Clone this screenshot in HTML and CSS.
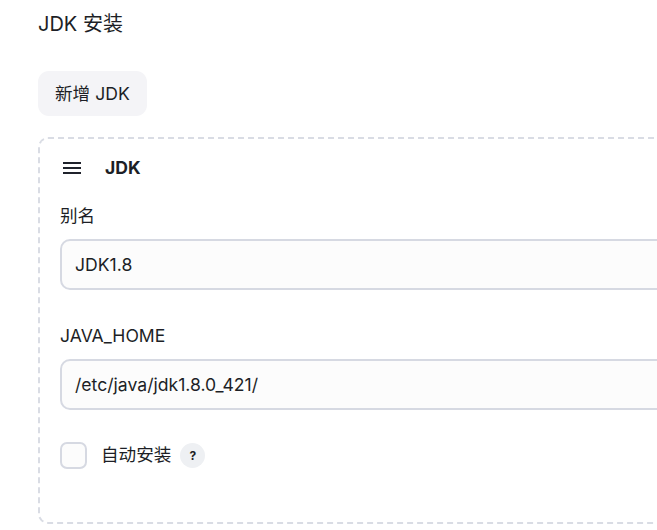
FILE: index.html
```html
<!DOCTYPE html>
<html lang="zh">
<head>
<meta charset="utf-8">
<link rel="stylesheet" href="styles.css">
</head>
<body>
<div class="page">
  <h2 class="section-title">JDK 安装</h2>
  <button class="add-btn" type="button">新增 JDK</button>
  <div class="repeat-card">
    <div class="card-header">
      <svg class="drag-icon" width="24" height="24" viewBox="0 0 24 24" aria-hidden="true">
        <path d="M3 7h18M3 12h18M3 17h18" stroke="#20232c" stroke-width="2" stroke-linecap="butt" fill="none"/>
      </svg>
      <span class="card-title">JDK</span>
    </div>
    <div class="field">
      <label class="field-label">别名</label>
      <div class="text-input"><span class="input-value">JDK1.8</span></div>
    </div>
    <div class="field field-second">
      <label class="field-label">JAVA_HOME</label>
      <div class="text-input"><span class="input-value">/etc/java/jdk1.8.0_421/</span></div>
    </div>
    <div class="check-row">
      <span class="checkbox"></span>
      <span class="check-label">自动安装</span>
      <span class="help">?</span>
    </div>
  </div>
</div>
</body>
</html>
```

FILE: styles.css
```css
html, body {
  margin: 0;
  padding: 0;
  background: #ffffff;
  overflow: hidden;
}
body {
  font-family: "Inter", "Noto Sans CJK SC", sans-serif;
  color: #1d1f26;
  font-size: 17.6px;
}
.page {
  width: 1100px;
  padding: 10px 0 0 38px;
}
.section-title {
  margin: 0;
  font-size: 20px;
  font-weight: 400;
  line-height: 28px;
  color: #1d1f26;
}
.add-btn {
  display: block;
  margin-top: 33px;
  height: 45px;
  padding: 0 17px 0 17px;
  border: none;
  border-radius: 11px;
  background: #f4f4f7;
  font-family: inherit;
  font-size: 17.6px;
  color: #1d1f26;
  line-height: 45px;
}
.repeat-card {
  margin-top: 21px;
  border: 2px dashed #d9dce4;
  border-radius: 10px;
  padding: 16px 20px 54px 20px;
}
.card-header {
  display: flex;
  align-items: center;
  height: 26px;
}
.drag-icon {
  display: block;
  margin-right: 21px;
}
.card-title {
  font-weight: 700;
  font-size: 17.6px;
  line-height: 26px;
}
.field {
  margin-top: 22px;
}
.field-second {
  margin-top: 33px;
}
.field-label {
  display: block;
  line-height: 26px;
  margin-bottom: 10px;
}
.text-input {
  box-sizing: border-box;
  display: flex;
  align-items: center;
  height: 51px;
  border: 2px solid #d6d9e2;
  border-radius: 10px;
  background: #fcfcfc;
  padding: 0 13px;
}
.input-value {
  display: block;
  line-height: 24px;
}
.check-row {
  display: flex;
  align-items: center;
  margin-top: 32px;
  height: 26px;
}
.checkbox {
  box-sizing: border-box;
  width: 27px;
  height: 27px;
  border: 2px solid #d6d9e2;
  border-radius: 7px;
  background: #fcfcfc;
  margin-right: 14px;
}
.check-label {
  line-height: 26px;
}
.help {
  display: inline-flex;
  align-items: center;
  justify-content: center;
  width: 25px;
  height: 25px;
  border-radius: 50%;
  background: #eef0f3;
  margin-left: 9px;
  font-size: 12px;
  font-weight: 700;
  color: #1d1f26;
}
```
